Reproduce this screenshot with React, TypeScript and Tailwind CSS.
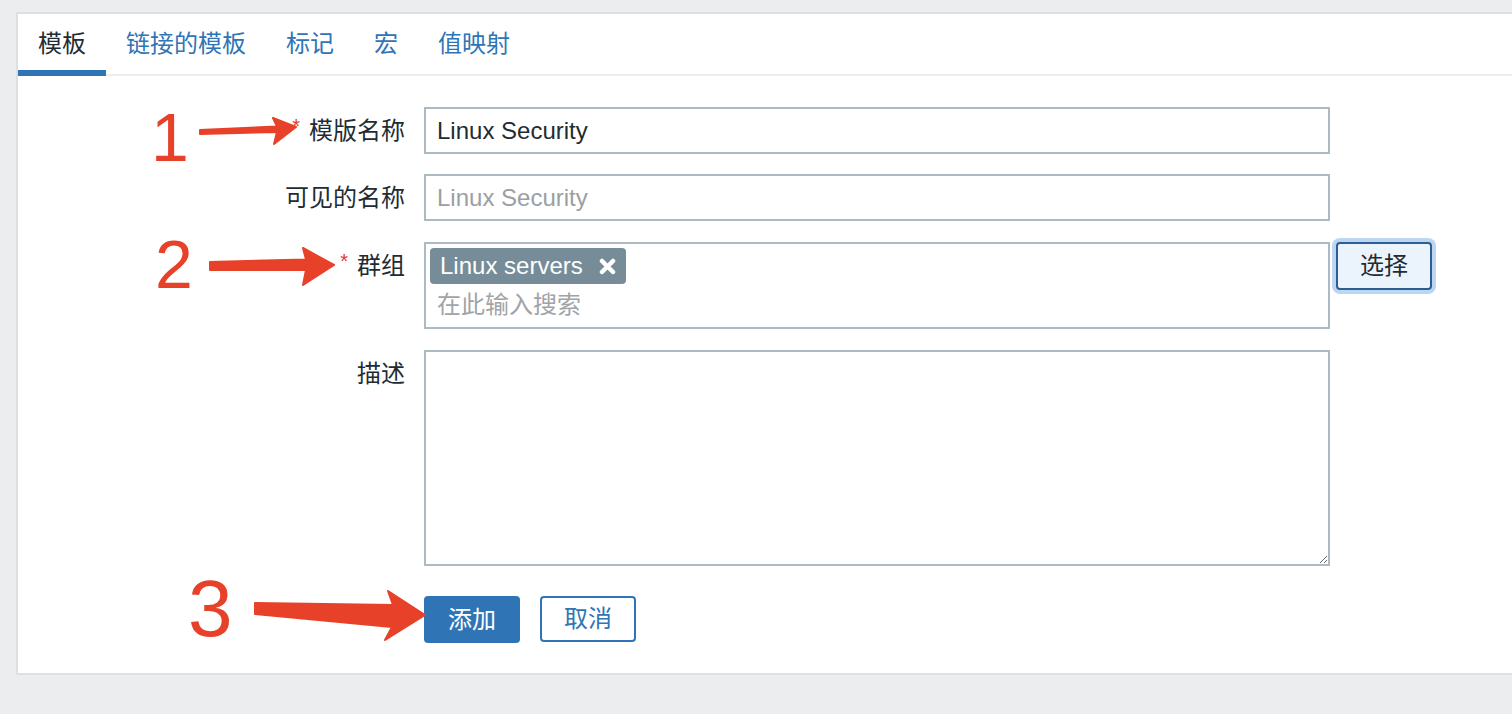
import React from "react";

const font = "font-['Liberation_Sans','Noto_Sans_CJK_SC',sans-serif]";

const Tab = ({ label, active = false }: { label: string; active?: boolean }) => (
  <div
    className={`px-5 pt-[18px] text-[24px] leading-[24px] ${
      active ? "h-[62px] text-[#1f2c33] border-b-[6px] border-[#2f74b5] -mb-[2px]" : "h-[60px] text-[#2f74b5]"
    }`}
  >
    {label}
  </div>
);

const Label = ({ text, required = false }: { text: string; required?: boolean }) => (
  <div className="w-[387px] shrink-0 h-[47px] flex items-center justify-end pr-0 text-[24px] leading-[24px] text-[#1f2c33]">
    {required && <span className="text-[#e33734] text-[20px] mr-[9px] -mt-[10px]">*</span>}
    {text}
  </div>
);

const Arrow = ({ points }: { points: string }) => (
  <polygon points={points} fill="#e8412a" stroke="#e8412a" strokeWidth="2" strokeLinejoin="round" />
);

export default function App() {
  return (
    <div className={`relative h-[714px] overflow-hidden bg-[#ebedef] pt-[12px] pl-[16px] ${font}`}>
      {/* Card */}
      <div className="bg-white border-2 border-[#dde0e3] mr-[-8px]">
        {/* Tabs */}
        <div className="flex items-start border-b-2 border-[#ebedef]">
          <Tab label="模板" active />
          <Tab label="链接的模板" />
          <Tab label="标记" />
          <Tab label="宏" />
          <Tab label="值映射" />
        </div>

        {/* Form */}
        <div className="pt-[31px] pb-[30px]">
          <div className="flex gap-[19px] mb-[20px]">
            <Label text="模版名称" required />
            <div className="w-[906px] h-[47px] border-2 border-[#acbac1] flex items-center px-[11px] text-[24px] text-[#1f2c33]">
              Linux Security
            </div>
          </div>

          <div className="flex gap-[19px] mb-[21px]">
            <Label text="可见的名称" />
            <div className="w-[906px] h-[47px] border-2 border-[#acbac1] flex items-center px-[11px] text-[24px] text-[#9a9fa3]">
              Linux Security
            </div>
          </div>

          <div className="flex gap-[19px] mb-[21px] items-start">
            <Label text="群组" required />
            <div className="w-[906px] h-[87px] border-2 border-[#acbac1] pt-[4px] pl-[4px]">
              <div className="inline-flex items-center h-[36px] bg-[#768d99] rounded-[4px] pl-[10px] pr-[10px] text-white text-[24px] leading-[24px]">
                Linux servers
                <svg className="ml-[16px]" width="17" height="17" viewBox="0 0 17 17">
                  <path d="M3 3 L14 14 M14 3 L3 14" stroke="white" strokeWidth="4.5" strokeLinecap="round" />
                </svg>
              </div>
              <div className="pl-[7px] pt-[6px] text-[24px] leading-[30px] text-[#a0a4a7]">在此输入搜索</div>
            </div>
            <button className="ml-[-13px] w-[96px] h-[48px] border-2 border-[#2b5f94] bg-[#ebf3fc] rounded-[4px] ring-4 ring-[#bcd5f1] text-[24px] text-[#1f2c33]">
              选择
            </button>
          </div>

          <div className="flex gap-[19px] mb-[30px]">
            <Label text="描述" />
            <textarea className="w-[906px] h-[216px] border-2 border-[#acbac1] outline-none resize" />
          </div>

          <div className="flex gap-[19px]">
            <div className="w-[387px] shrink-0" />
            <div className="flex gap-[20px]">
              <button className="w-[96px] h-[47px] bg-[#2f74b5] rounded-[4px] text-white text-[24px]">添加</button>
              <button className="w-[96px] h-[46px] border-2 border-[#2f74b5] rounded-[4px] bg-white text-[#2f74b5] text-[24px]">
                取消
              </button>
            </div>
          </div>
        </div>
      </div>

      {/* Annotations */}
      <span className="absolute left-[151px] top-[97px] text-[68px] leading-[80px] text-[#e8412a]">1</span>
      <span className="absolute left-[155px] top-[224px] text-[68px] leading-[80px] text-[#e8412a]">2</span>
      <span className="absolute left-[188px] top-[564px] text-[80px] leading-[90px] text-[#e8412a]">3</span>
      <svg className="absolute left-0 top-0 pointer-events-none" width="1512" height="714">
        <Arrow points="200,130 277,126.5 273,118 296,127 274,144 277,132 200,134" />
        <Arrow points="210,262 306,259.5 303,248 334,265 303,285 306,270 210,270" />
        <Arrow points="255,603 393,605 388,591 425,615 385,640 392,627 255,614" />
      </svg>
    </div>
  );
}
